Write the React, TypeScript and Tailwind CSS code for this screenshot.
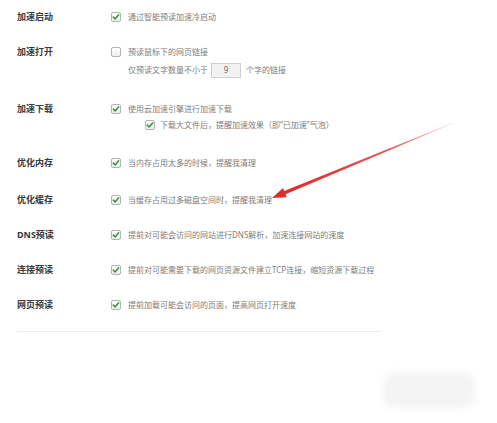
import React from "react";

const Box = ({ checked = true }: { checked?: boolean }) => (
  <span className="flex h-[10px] w-[10px] shrink-0 items-center justify-center rounded-[2px] border border-[#b3b3b3] bg-gradient-to-b from-white to-[#ededed]">
    {checked && (
      <svg width="8" height="8" viewBox="0 0 8 8">
        <path d="M1.3 4.1 L3.1 5.9 L6.7 1.8" fill="none" stroke="#2f9a3c" strokeWidth="1.5" strokeLinecap="round" strokeLinejoin="round" />
      </svg>
    )}
  </span>
);

const Label = ({ children }: { children: React.ReactNode }) => (
  <div className="w-[94px] shrink-0 text-[9px] font-bold leading-[12px] text-[#3a3a3a]">{children}</div>
);

const Row = ({ label, text, checked = true, className = "" }: { label: string; text: string; checked?: boolean; className?: string }) => (
  <div className={`flex h-[12px] items-center ${className}`}>
    <Label>{label}</Label>
    <Box checked={checked} />
    <span className="ml-[7px] whitespace-nowrap text-[8px] leading-[12px] text-[#7d7d7d]">{text}</span>
  </div>
);

export default function App() {
  return (
    <div
      className="relative h-[423px] w-[497px] overflow-hidden bg-white"
      style={{ fontFamily: '"Noto Sans", "Noto Sans CJK SC", sans-serif' }}
    >
      <div className="flex w-[364px] flex-col pl-[17px] pt-[11px]">
        <Row label="加速启动" text="通过智能预读加速冷启动" />

        <Row className="mt-[23px]" label="加速打开" text="预读鼠标下的网页链接" checked={false} />
        <div className="mt-[4px] flex h-[16px] items-center pl-[111px] text-[8px] text-[#7d7d7d]">
          <span className="whitespace-nowrap">仅预读文字数量不小于</span>
          <span className="ml-[3px] flex h-[15px] w-[30px] items-center justify-center border border-[#cfcfcf] bg-[#f2f2f2] text-[8px] text-[#666]">9</span>
          <span className="ml-[5px] whitespace-nowrap">个字的链接</span>
        </div>

        <Row className="mt-[25px]" label="加速下载" text="使用云加速引擎进行加速下载" />
        <div className="mt-[4px] flex h-[12px] items-center pl-[128px]">
          <Box />
          <span className="ml-[5px] whitespace-nowrap text-[8px] leading-[12px] text-[#7d7d7d]">下载大文件后，提醒加速效果（即“已加速”气泡）</span>
        </div>

        <Row className="mt-[26px]" label="优化内存" text="当内存占用太多的时候，提醒我清理" />
        <Row className="mt-[25px]" label="优化缓存" text="当缓存占用过多磁盘空间时，提醒我清理" />
        <Row className="mt-[23px]" label="DNS预读" text="提前对可能会访问的网站进行DNS解析，加速连接网站的速度" />
        <Row className="mt-[23px]" label="连接预读" text="提前对可能需要下载的网页资源文件建立TCP连接，缩短资源下载过程" />
        <Row className="mt-[23px]" label="网页预读" text="提前加载可能会访问的页面，提高网页打开速度" />

        <div className="mt-[20px] h-px w-[364px] bg-[#ececec]" />
      </div>

      <svg className="pointer-events-none absolute left-0 top-0" width="497" height="423">
        <defs>
          <linearGradient id="ag" gradientUnits="userSpaceOnUse" x1="453" y1="123" x2="272" y2="198">
            <stop offset="0" stopColor="#e23434" stopOpacity="0.15" />
            <stop offset="0.35" stopColor="#e23434" stopOpacity="0.85" />
            <stop offset="1" stopColor="#e02828" />
          </linearGradient>
        </defs>
        <polygon
          points="453.11,123.28 285.59,194.26 286.8,197.2 272,198 283.0,188.0 284.21,190.94 452.89,122.72"
          fill="url(#ag)"
        />
      </svg>

      <div className="pointer-events-none absolute left-[383px] top-[372px] h-[36px] w-[92px] rounded-[12px] bg-[#f4f4f4] blur-[3px]" />
    </div>
  );
}
